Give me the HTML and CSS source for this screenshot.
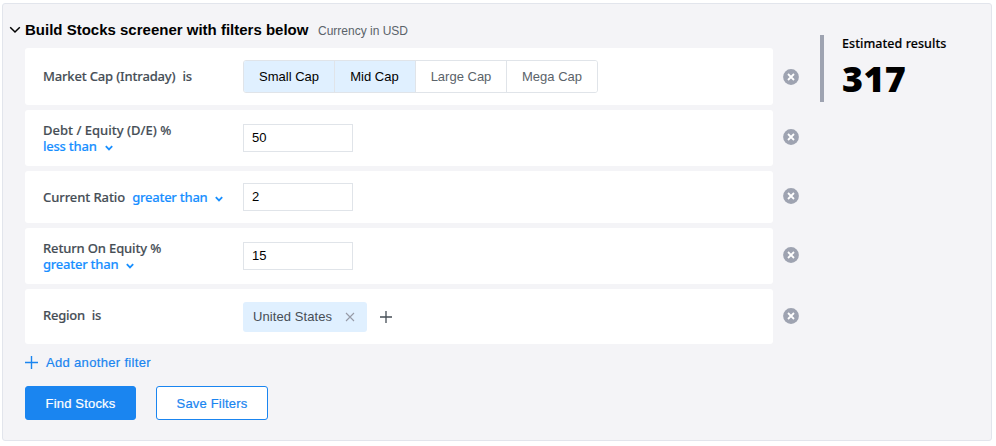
FILE: index.html
```html
<!DOCTYPE html>
<html lang="en">
<head>
<meta charset="utf-8">
<title>Stock screener</title>
<link rel="stylesheet" href="styles.css">
</head>
<body>
<svg class="defs" width="0" height="0">
  <symbol id="remove" viewBox="0 0 16 16"><circle cx="8" cy="8" r="7.9" fill="#9ea3b1"/><path d="M5 5l6 6M11 5l-6 6" stroke="#fff" stroke-width="1.8"/></symbol>
  <symbol id="chev" viewBox="0 0 8 6"><path d="M.8 1.2L4 4.4l3.2-3.2" fill="none" stroke="#188fff" stroke-width="1.8"/></symbol>
</svg>
<main class="panel">
  <section class="builder">
    <header class="heading">
      <svg class="toggle" width="12" height="8" viewBox="0 0 12 8"><path d="M1.2 1.2L6 6l4.800-4.800" fill="none" stroke="#000" stroke-width="1.5"/></svg>
      <h1>Build Stocks screener with filters below</h1>
      <span class="currency">Currency in USD</span>
    </header>
    <div class="filter cap">
      <div class="card">
        <div class="label"><span class="name">Market Cap (Intraday)</span><span class="is">is</span></div>
        <div class="segments"><button class="on s1">Small Cap</button><button class="on s2">Mid Cap</button><button class="s3">Large Cap</button><button class="s4">Mega Cap</button></div>
      </div>
      <svg class="remove"><use href="#remove"/></svg>
    </div>
    <div class="filter debt">
      <div class="card">
        <div class="label stacked"><span class="name">Debt / Equity (D/E) %</span><a class="op">less than<svg class="chev"><use href="#chev"/></svg></a></div>
        <input value="50" aria-label="Debt / Equity">
      </div>
      <svg class="remove"><use href="#remove"/></svg>
    </div>
    <div class="filter ratio">
      <div class="card">
        <div class="label"><span class="name">Current Ratio</span><a class="op">greater than<svg class="chev"><use href="#chev"/></svg></a></div>
        <input value="2" aria-label="Current Ratio">
      </div>
      <svg class="remove"><use href="#remove"/></svg>
    </div>
    <div class="filter roe">
      <div class="card">
        <div class="label stacked"><span class="name">Return On Equity %</span><a class="op">greater than<svg class="chev"><use href="#chev"/></svg></a></div>
        <input value="15" aria-label="Return On Equity">
      </div>
      <svg class="remove"><use href="#remove"/></svg>
    </div>
    <div class="filter region">
      <div class="card">
        <div class="label"><span class="name">Region</span><span class="is">is</span></div>
        <span class="tag"><span class="country">United States</span><svg width="10" height="10" viewBox="0 0 10 10"><path d="M1 1l8 8M9 1L1 9" stroke="#979ba7" stroke-width="1.1"/></svg></span>
        <svg class="plus" width="12" height="12" viewBox="0 0 12 12"><path d="M6 0v12M0 6h12" stroke="#464e56" stroke-width="1.3"/></svg>
      </div>
      <svg class="remove"><use href="#remove"/></svg>
    </div>
    <a class="add"><svg width="13" height="13" viewBox="0 0 13 13"><path d="M6.500 0v13M0 6.500h13" stroke="#1a85f0" stroke-width="1.4"/></svg><span>Add another filter</span></a>
    <div class="actions"><button class="find">Find Stocks</button><button class="save">Save Filters</button></div>
  </section>
  <aside class="results">
    <div class="caption">Estimated results</div>
    <div class="count">317</div>
  </aside>
</main>
</body>
</html>
```
FILE: styles.css
```css
* { box-sizing: border-box; }
body { margin: 0; padding: 3px 4px 5px 2px; height: 446px; background: #fff; font-family: "Liberation Sans", sans-serif; font-size: 13px; color: #000; }
button, input { font: inherit; margin: 0; padding: 0; }
.defs { display: block; position: absolute; }
.panel { display: flex; height: 438px; background: #f4f4f7; border: 1px solid #e2e5ec; border-radius: 3px; }
.builder { width: 817px; padding: 16px 0 0 22px; }
.heading { display: flex; align-items: center; height: 20px; margin: 0 0 8px -16px; }
.toggle { margin-right: 4px; margin-top: -1px; }
h1 { margin: 0; font-size: 15px; line-height: 20px; white-space: nowrap; width: 284px; }
.currency { font-size: 12px; color: #5b636a; margin-left: 9px; margin-top: 1px; white-space: nowrap; }
.filter { display: flex; align-items: center; margin-bottom: 5px; }
.cap { height: 57px; }
.debt, .roe { height: 56px; }
.ratio { height: 52px; }
.region { height: 55px; }
.card { display: flex; align-items: center; width: 748px; height: 100%; padding-left: 18px; background: #fff; border-radius: 3px; }
.remove { width: 16px; height: 16px; margin-left: 10px; }
.debt .remove, .roe .remove { margin-top: -2px; }
.ratio .remove { margin-top: -2px; }
.region .remove { margin-top: -1px; }
.label { display: flex; width: 200px; font: 500 13px/16px "Noto Sans", sans-serif; color: #464e56; white-space: nowrap; -webkit-text-stroke: .15px; }
.cap .label { letter-spacing: -.17px; margin-top: -1px; }
.ratio .label { letter-spacing: -.08px; }
.roe .label { letter-spacing: -.15px; }
.region .label { margin-top: -3px; letter-spacing: -.25px; }
.stacked { flex-direction: column; align-items: flex-start; }
.is { margin-left: 7px; }
.op { color: #188fff; margin-left: 7px; letter-spacing: -.24px; }
.stacked .op { margin-left: 0; }
.chev { width: 8px; height: 6px; margin-left: 8px; }
.ratio .chev { margin-left: 7px; }
input { width: 110px; height: 28px; border: 1px solid #e0e4e9; padding-left: 8px; color: #000; background: #fff; outline: 0; margin-top: -1px; }
.segments { display: flex; height: 33px; width: 355px; border: 1px solid #e0e4e9; border-radius: 3px; overflow: hidden; }
.segments button { border: 0; border-right: 1px solid #e0e4e9; background: #fff; color: #5b636a; width: 91px; flex: none; }
.segments .on { background: #e0f0ff; color: #000; }
.segments .s2 { width: 81px; padding-right: 1px; }
.segments .s4 { border-right: 0; width: 90px; }
.tag { display: flex; align-items: center; width: 124px; height: 30px; padding-left: 10px; border-radius: 3px; background: #e0f0ff; color: #464e56; }
.country { width: 79px; margin-right: 13px; letter-spacing: .08px; white-space: nowrap; }
.plus { margin-left: 13px; }
.add { display: flex; align-items: center; height: 16px; margin-top: 10px; color: #1a85f0; -webkit-text-stroke: .2px; }
.add span { margin-left: 8px; letter-spacing: .33px; }
.actions { display: flex; gap: 20px; margin-top: 16px; }
.actions button { height: 34px; border: 1px solid #1a85f0; border-radius: 3px; letter-spacing: .18px; -webkit-text-stroke: .2px; }
.find { width: 111px; background: #1a85f0; color: #fff; }
.save { width: 112px; background: #fff; color: #1a85f0; }
.results { height: 67px; margin-top: 31px; padding: 1px 0 0 18px; border-left: 4px solid #9ea3b1; font-family: "Noto Sans", sans-serif; white-space: nowrap; }
.caption { font-size: 12.5px; font-weight: 500; line-height: 16px; letter-spacing: .05px; -webkit-text-stroke: .15px; }
.count { font-size: 36px; font-weight: 900; line-height: 54px; letter-spacing: .3px; }
```
